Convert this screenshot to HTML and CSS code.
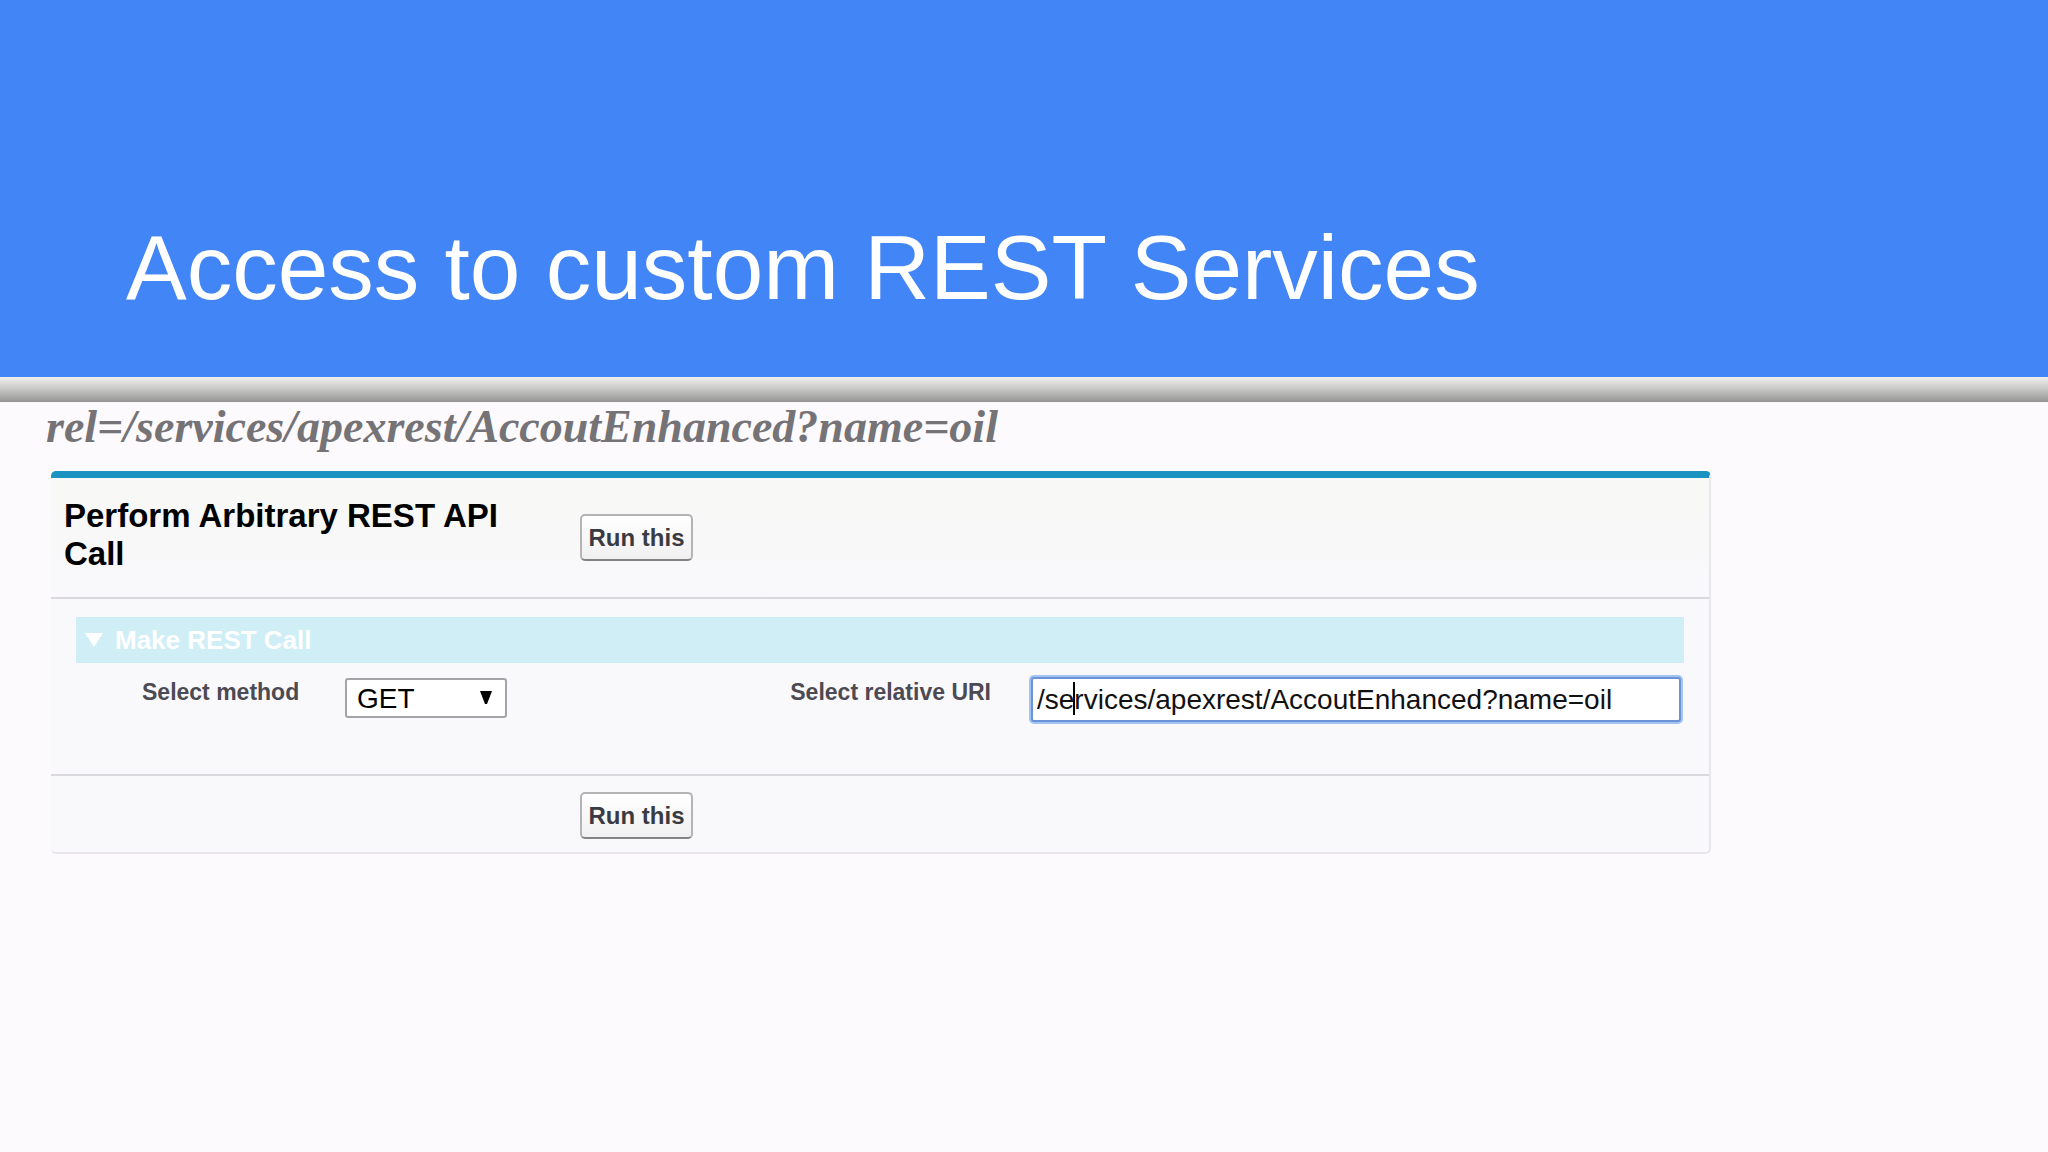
FILE: index.html
```html
<!DOCTYPE html>
<html lang="en">
<head>
    <meta charset="UTF-8">
    <meta name="viewport" content="width=device-width, initial-scale=1.0">
    <title>Access to custom REST Services</title>
    <link rel="stylesheet" href="styles.css">
</head>
<body>
    <header class="slide-header">
        <h1>Access to custom REST Services</h1>
    </header>

    <main class="slide-body">
        <p class="rel-link">rel=/services/apexrest/AccoutEnhanced?name=oil</p>

        <form class="panel">
            <div class="panel-head">
                <h2>Perform Arbitrary REST API Call</h2>
                <button type="button" class="run-button">Run this</button>
            </div>

            <section class="panel-section">
                <h3 class="section-title">
                    <svg class="section-arrow" viewBox="0 0 18 14" aria-hidden="true"><path d="M0 0h18L9 14z"/></svg>
                    Make REST Call
                </h3>
                <div class="fields">
                    <label class="method-label" for="method">Select method</label>
                    <div class="method-field">
                        <select id="method">
                            <option>GET</option>
                            <option>POST</option>
                            <option>PUT</option>
                            <option>DELETE</option>
                        </select>
                        <svg class="select-arrow" viewBox="0 0 12 13" aria-hidden="true"><path d="M0 0h12L7 13H5z"/></svg>
                    </div>
                    <label class="uri-label" for="uri">Select relative URI</label>
                    <div class="uri-field">
                        <input type="text" id="uri" value="/services/apexrest/AccoutEnhanced?name=oil">
                        <span class="caret"></span>
                    </div>
                </div>
            </section>

            <div class="panel-foot">
                <button type="button" class="run-button">Run this</button>
            </div>
        </form>
    </main>
</body>
</html>
```
FILE: styles.css
```css
* { box-sizing: border-box; }

body {
    margin: 0;
    min-height: 100vh;
    background: #fcfafd;
    font-family: "Liberation Sans", Arial, sans-serif;
}

h1, h2, h3, p { margin: 0; }

/* Header */
.slide-header {
    padding: 214px 126px 55px;
    background: #4285f6;
}

.slide-header h1 {
    color: white;
    font-size: 91px;
    font-weight: normal;
    line-height: 108px;
}

/* Grey strip under the header */
.slide-body::before {
    content: '';
    display: block;
    height: 25px;
    background: linear-gradient(#f0f0ee, #cacac8 45%, #949492);
}

.rel-link {
    padding: 0 46px;
    height: 69px;
    color: #757376;
    font-family: "Liberation Serif", "Times New Roman", serif;
    font-size: 46px;
    font-style: italic;
    font-weight: bold;
    line-height: 50px;
}

/* Panel */
.panel {
    margin: 0 337px 0 51px;
    border: 2px solid #e8e6ea;
    border-top: 7px solid #1b93c1;
    border-left-width: 0;
    border-radius: 5px;
    background: #f9f8fb;
}

.panel-head {
    display: flex;
    gap: 68px;
    align-items: flex-start;
    height: 119px;
    padding: 19px 13px;
    background: linear-gradient(#f8f8f6, #f9f8fb);
}

.panel-head h2 {
    width: 448px;
    font-size: 33px;
    line-height: 38px;
}

.run-button {
    width: 113px;
    height: 47px;
    margin-top: 17px;
    padding: 0;
    border: 2px solid #b5b3b5;
    border-bottom-color: #838183;
    border-radius: 5px;
    background: linear-gradient(#ffffff, #f0f0f0);
    color: #3a3a42;
    font-family: inherit;
    font-size: 24px;
    font-weight: bold;
}

.panel-section {
    height: 179px;
    padding: 18px 25px 0;
    border-top: 2px solid #dad8dc;
    border-bottom: 2px solid #dad8dc;
}

.section-title {
    display: flex;
    align-items: center;
    gap: 12px;
    height: 46px;
    padding: 0 9px;
    background: #cfeef6;
    color: white;
    font-size: 26px;
}

.section-arrow {
    width: 18px;
    height: 14px;
    fill: white;
}

.fields {
    display: flex;
    align-items: flex-start;
    padding: 14px 3px 0 66px;
}

.fields label {
    color: #4c4a52;
    font-size: 23px;
    font-weight: bold;
    line-height: 30px;
}

.method-label { width: 203px; }

.uri-label {
    margin-left: auto;
    margin-right: 40px;
}

.method-field {
    position: relative;
    width: 162px;
    margin-top: 1px;
}

.method-field select {
    appearance: none;
    width: 100%;
    height: 40px;
    padding: 0 10px;
    border: 2px solid #a5a3a7;
    border-radius: 3px;
    background: white;
    color: black;
    font-family: inherit;
    font-size: 28px;
}

.select-arrow {
    position: absolute;
    top: 13px;
    right: 15px;
    width: 12px;
    height: 13px;
    pointer-events: none;
}

.uri-field {
    position: relative;
    width: 650px;
}

.uri-field input {
    width: 100%;
    height: 45px;
    padding: 0 4px;
    border: 2px solid #6b93d6;
    border-radius: 3px;
    outline: none;
    box-shadow: 0 0 0 2px #a3c4f3;
    background: white;
    color: #111;
    font-family: inherit;
    font-size: 28px;
}

/* Text cursor */
.caret {
    position: absolute;
    top: 5px;
    left: 42px;
    width: 2px;
    height: 33px;
    background: black;
}

.panel-foot {
    height: 76px;
    padding-left: 529px;
}

.panel-foot .run-button { margin-top: 16px; }
```
